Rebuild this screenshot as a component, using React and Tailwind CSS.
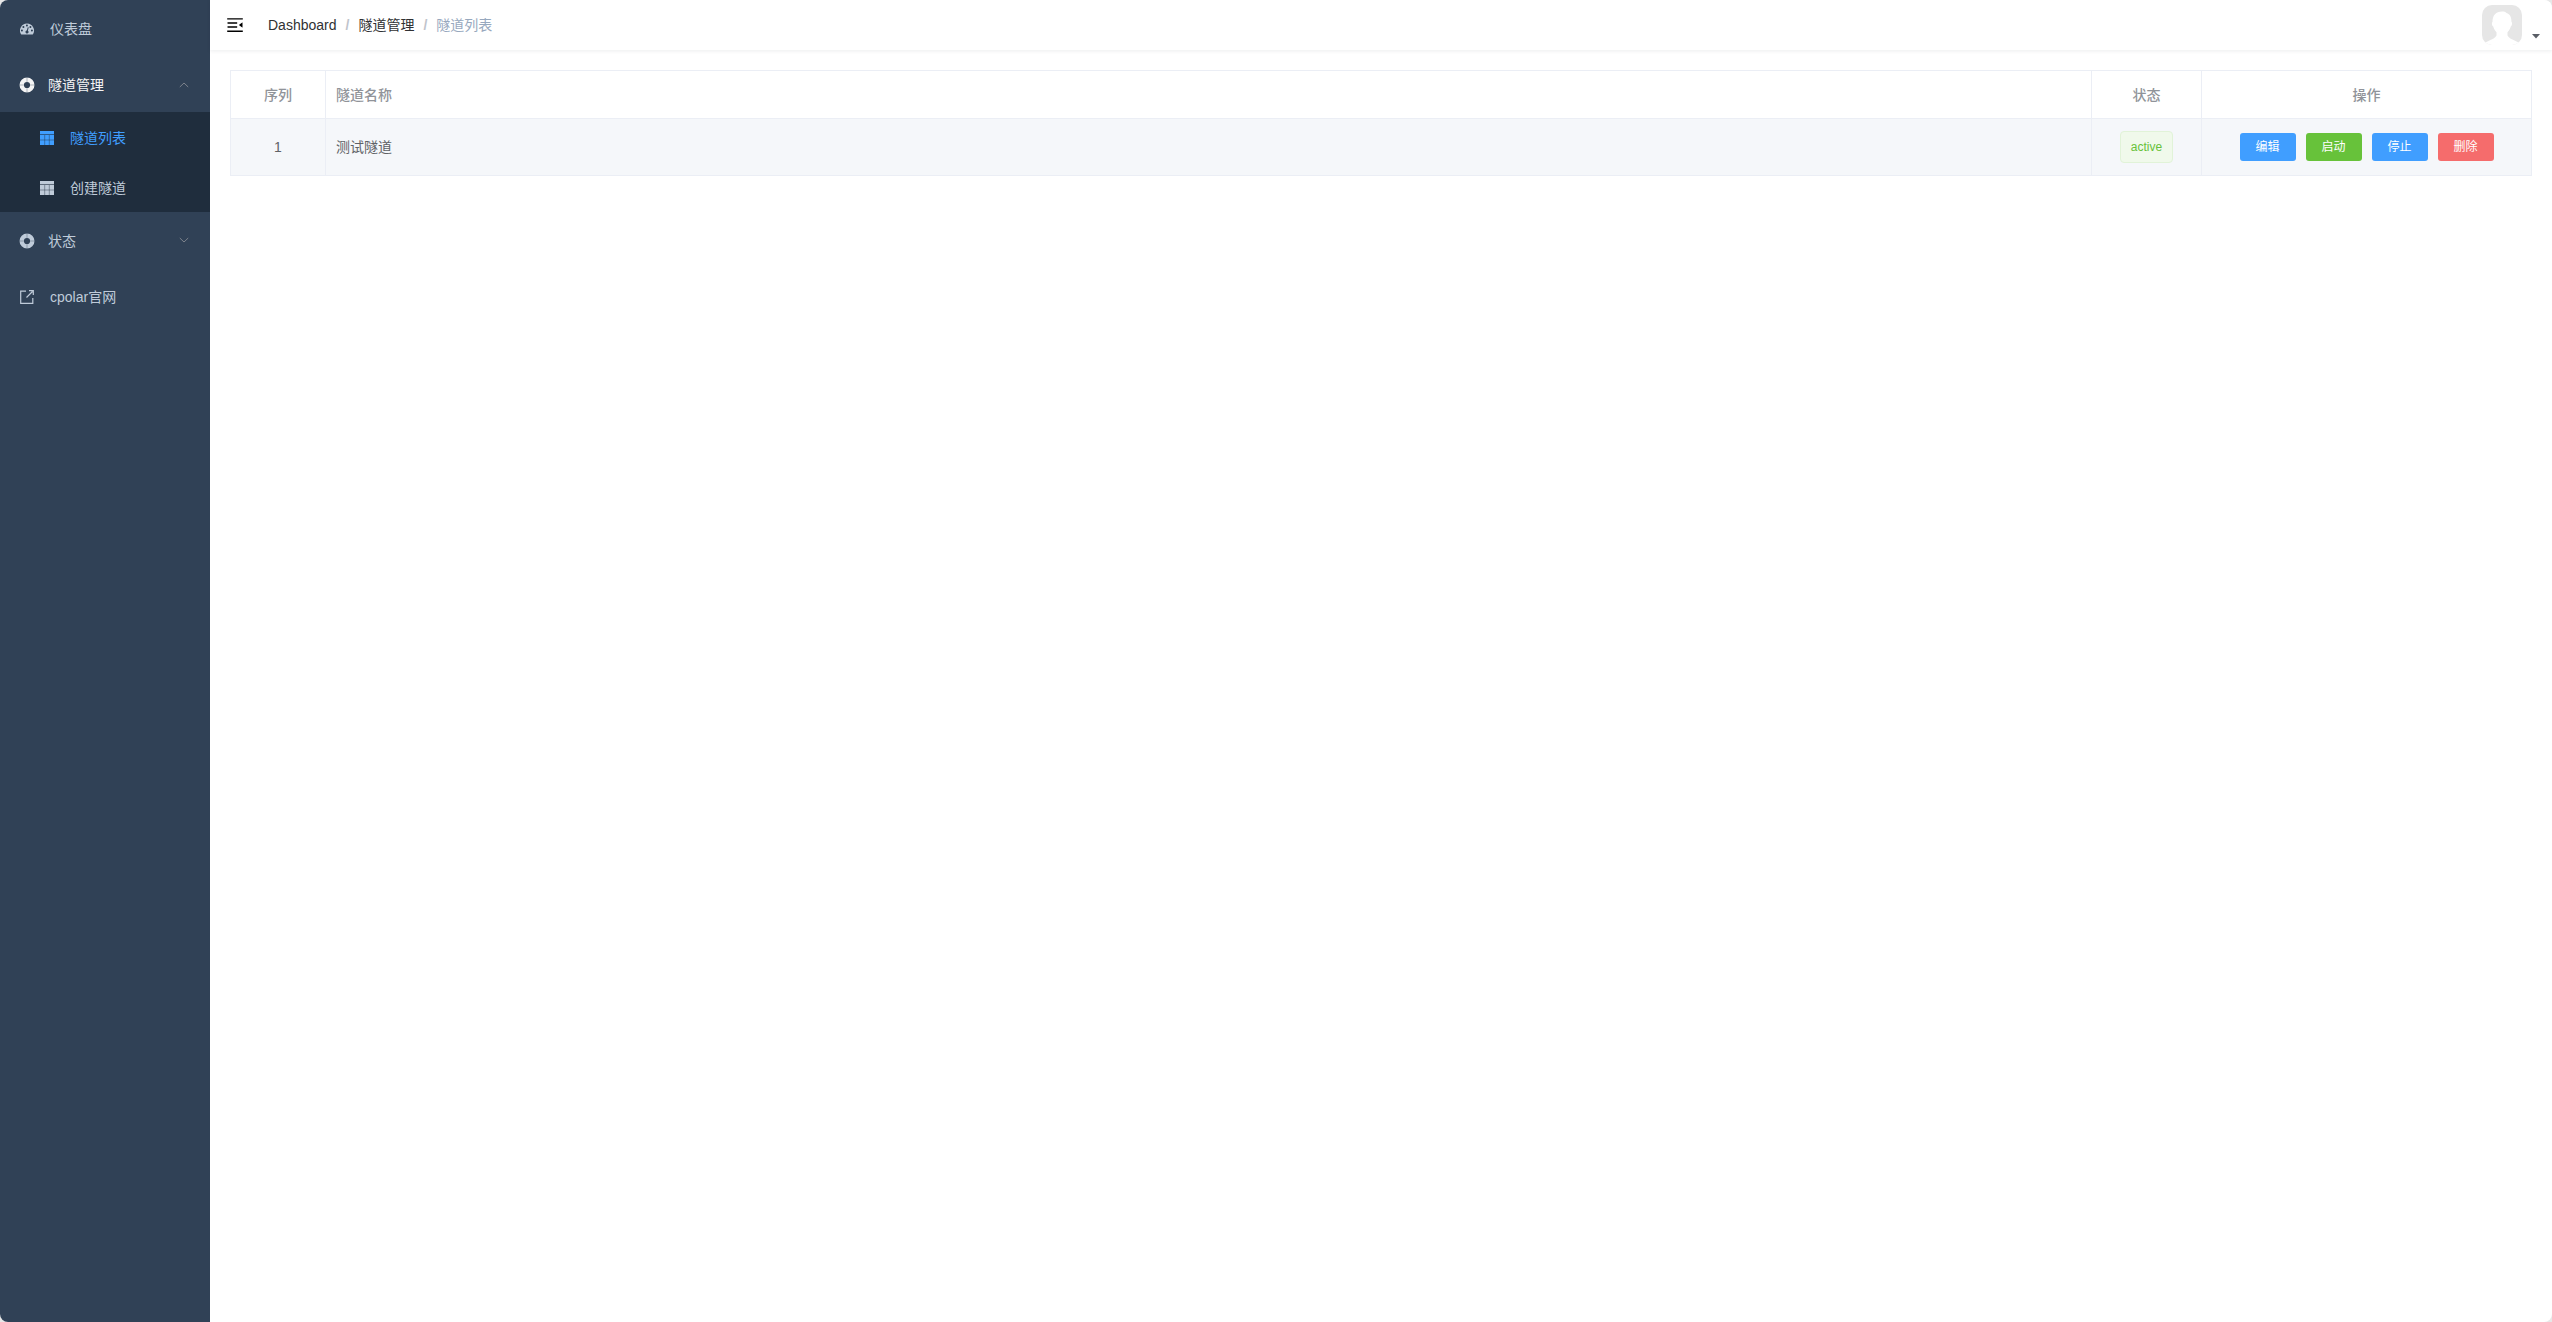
const tunnels = [{ id: 1, name: '测试隧道', status: 'active' }];

function DashboardIcon() {
  return (
    <svg viewBox="0 0 128 100" className="h-[14px] w-[14px]" fill="currentColor" aria-hidden="true">
      <path
        fillRule="evenodd"
        d="M64 0a64 63.640 0 0 1 53.890 97.910q-1.290 2.090-3.860 2.090H13.960q-2.570 0-3.850-2.060A64 63.640 0 0 1 64 0zM18.290 54.550a9.140 9.140 0 1 0 0 18.200 9.140 9.140 0 0 0 0-18.200zM32 22.740a9.140 9.140 0 1 0 0 18.200 9.140 9.140 0 0 0 0-18.200zM64 9.100a9.140 9.140 0 1 0 0 18.200 9.140 9.140 0 0 0 0-18.200zM96 22.740a9.140 9.140 0 1 0 0 18.200 9.140 9.140 0 0 0 0-18.200zM109.700 54.550a9.140 9.140 0 1 0 0 18.200 9.140 9.140 0 0 0 0-18.200zM71.860 65.910l7.210-27.130c.330-1.230.150-2.400-.530-3.480-.690-1.090-1.650-1.790-2.890-2.100-1.240-.330-2.400-.170-3.500.500-1.100.660-1.820 1.600-2.150 2.840l-7.210 27.120c-2.860.240-5.400 1.290-7.640 3.160-2.240 1.870-3.690 4.250-4.360 7.140-.950 3.690-.470 7.200 1.430 10.510 1.900 3.320 4.710 5.450 8.430 6.400 3.710.940 7.240.470 10.570-1.430 3.330-1.890 5.480-4.690 6.430-8.380.760-2.890.600-5.680-.460-8.380-1.080-2.700-2.840-4.960-5.330-6.770z"
      />
    </svg>
  );
}

function RingIcon() {
  return (
    <svg viewBox="0 0 18 18" className="h-[18px] w-[18px]" fill="none" aria-hidden="true">
      <circle cx="9" cy="9" r="5.300" stroke="currentColor" strokeWidth="4.400" />
      <path d="M9 1v5M9 12v5M1 9h5M12 9h5" stroke="#304156" strokeOpacity=".6" strokeWidth=".6" />
    </svg>
  );
}

function TableIcon() {
  return (
    <svg viewBox="0 0 14 14" className="h-[14px] w-[14px]" aria-hidden="true">
      <path fill="currentColor" d="M0 0h14v14H0z" />
      <path d="M0 3.500h14" stroke="#1f2d3d" strokeOpacity=".6" />
      <path d="M0 9h14M4.700 4v10M9.300 4v10" stroke="#1f2d3d" strokeWidth=".6" strokeOpacity=".7" />
    </svg>
  );
}

function LinkIcon() {
  return (
    <svg viewBox="0 0 14 14" className="h-[14px] w-[14px]" fill="none" stroke="currentColor" strokeWidth="1.200" aria-hidden="true">
      <path d="M6 1.200H.7v12.100h12.100V8" />
      <path d="M6.500 7.500l6-6M9 .7h4.300V5" />
    </svg>
  );
}

function Chevron({ up }) {
  return (
    <svg viewBox="0 0 12 12" className="h-3 w-3 text-[#909399]" fill="none" stroke="currentColor" strokeWidth=".8" aria-hidden="true">
      <path d={up ? 'M1.800 8L6 4l4.200 4' : 'M1.800 3L6 7l4.200-4'} />
    </svg>
  );
}

function Group({ label, open }) {
  return (
    <button
      type="button"
      aria-expanded={open}
      className={`flex h-14 w-full items-center pt-px pr-5 pl-[18px] ${open ? 'text-[#f4f4f5]' : 'text-[#bfcbd9]'}`}
    >
      <RingIcon />
      <span className="ml-3 flex-1 text-left">{label}</span>
      <Chevron up={open} />
    </button>
  );
}

function Sidebar() {
  return (
    <nav className="w-[210px] shrink-0 bg-[#304156] text-[#bfcbd9]">
      <a href="#dashboard" className="flex h-14 items-center gap-4 px-5 pt-px">
        <DashboardIcon />
        仪表盘
      </a>
      <Group label="隧道管理" open />
      <div className="bg-[#1f2d3d]">
        <a href="#list" className="flex h-[50px] items-center gap-4 px-10 pt-px text-[#409eff]">
          <TableIcon />
          隧道列表
        </a>
        <a href="#create" className="flex h-[50px] items-center gap-4 px-10 pt-px">
          <TableIcon />
          创建隧道
        </a>
      </div>
      <Group label="状态" open={false} />
      <a href="#site" className="flex h-14 items-center gap-4 px-5 pt-px">
        <LinkIcon />
        cpolar官网
      </a>
    </nav>
  );
}

function Header() {
  return (
    <header className="flex h-[50px] items-center bg-white pr-3 pl-[15px] shadow-[0_1px_4px_rgba(0,21,41,0.08)]">
      <button type="button" aria-label="折叠菜单" className="text-black">
        <svg viewBox="0 0 1024 1024" className="h-5 w-5 rotate-180" fill="currentColor" aria-hidden="true">
          <path d="M408 442h480c4.400 0 8-3.600 8-8v-56c0-4.400-3.600-8-8-8H408c-4.400 0-8 3.600-8 8v56c0 4.400 3.600 8 8 8zm-8 204c0 4.400 3.600 8 8 8h480c4.400 0 8-3.600 8-8v-56c0-4.400-3.600-8-8-8H408c-4.400 0-8 3.600-8 8v56zm504-486H120c-4.400 0-8 3.600-8 8v56c0 4.400 3.600 8 8 8h784c4.400 0 8-3.600 8-8v-56c0-4.400-3.600-8-8-8zm0 632H120c-4.400 0-8 3.600-8 8v56c0 4.400 3.600 8 8 8h784c4.400 0 8-3.600 8-8v-56c0-4.400-3.600-8-8-8zM142.400 642.100L298.700 519a8.840 8.840 0 0 0 0-13.900L142.400 381.900c-5.800-4.600-14.400-.5-14.400 6.900v246.300a8.900 8.900 0 0 0 14.400 7z" />
        </svg>
      </button>
      <ol className="ml-[23px] flex items-center text-[#303133]">
        <li>
          <a href="#dashboard">Dashboard</a>
        </li>
        <li className="mx-[9px] font-bold text-[#c0c4cc]" aria-hidden="true">/</li>
        <li>
          <a href="#tunnels">隧道管理</a>
        </li>
        <li className="mx-[9px] font-bold text-[#c0c4cc]" aria-hidden="true">/</li>
        <li className="text-[#97a8be]">隧道列表</li>
      </ol>
      <button type="button" aria-label="用户菜单" className="ml-auto flex items-end gap-[10px]">
        <svg viewBox="0 0 40 40" className="h-10 w-10 rounded-[10px]" aria-hidden="true">
          <rect width="40" height="40" fill="#e6e6e6" />
          <path
            fill="#fff"
            d="M10.500 17C10.500 10 14 6.500 20 6.500c2 0 3.500.4 4.500 1.400 3.500 1 5 4 5 9.100.9.300.8 3.600-.7 4.500-.8 2.400-1.800 4.200-3.300 5.700v3.300c1.500 3 6 4.500 12.500 7.500v2H2v-2c6.500-3 11-4.500 12.500-7.500v-3.300c-1.500-1.500-2.500-3.300-3.300-5.700-1.500-.9-1.600-4.200-.7-4.500z"
          />
        </svg>
        <svg viewBox="0 0 8 12" className="h-3 w-2 text-[#5a5e66]" fill="currentColor" aria-hidden="true">
          <path d="M0 1h8L4 5.500z" />
        </svg>
      </button>
    </header>
  );
}

const base = 'h-7 w-14 rounded-[3px] text-xs text-white';

function TunnelTable() {
  return (
    <table className="w-full table-fixed border-collapse text-[#606266] [&_td]:border [&_td]:border-[#ebeef5] [&_th]:border [&_th]:border-[#ebeef5] [&_th]:font-medium">
      <colgroup>
        <col className="w-[95px]" />
        <col />
        <col className="w-[110px]" />
        <col className="w-[330px]" />
      </colgroup>
      <thead>
        <tr className="h-12 text-[#909399]">
          <th>序列</th>
          <th className="px-[10px] text-left">隧道名称</th>
          <th>状态</th>
          <th>操作</th>
        </tr>
      </thead>
      <tbody>
        {tunnels.map((t) => (
          <tr key={t.id} className="h-[57px] bg-[#f5f7fa] text-center">
            <td>{t.id}</td>
            <td className="px-[10px] text-left">{t.name}</td>
            <td>
              <span className="inline-flex h-8 items-center rounded border border-[#e1f3d8] bg-[#f0f9eb] px-[10px] align-middle text-xs text-[#67c23a]">
                {t.status}
              </span>
            </td>
            <td>
              <div className="flex justify-center gap-[10px]">
                <button type="button" className={`${base} bg-[#409eff]`}>编辑</button>
                <button type="button" className={`${base} bg-[#67c23a]`}>启动</button>
                <button type="button" className={`${base} bg-[#409eff]`}>停止</button>
                <button type="button" className={`${base} bg-[#f56c6c]`}>删除</button>
              </div>
            </td>
          </tr>
        ))}
      </tbody>
    </table>
  );
}

export default function App() {
  return (
    <div className="bg-[#e8e8e8] font-['Liberation_Sans','Noto_Sans_CJK_SC',sans-serif] text-sm">
      <div className="flex min-h-screen overflow-hidden rounded-lg bg-white">
        <Sidebar />
        <div className="min-w-0 flex-1">
          <Header />
          <main className="p-5">
            <TunnelTable />
          </main>
        </div>
      </div>
    </div>
  );
}
